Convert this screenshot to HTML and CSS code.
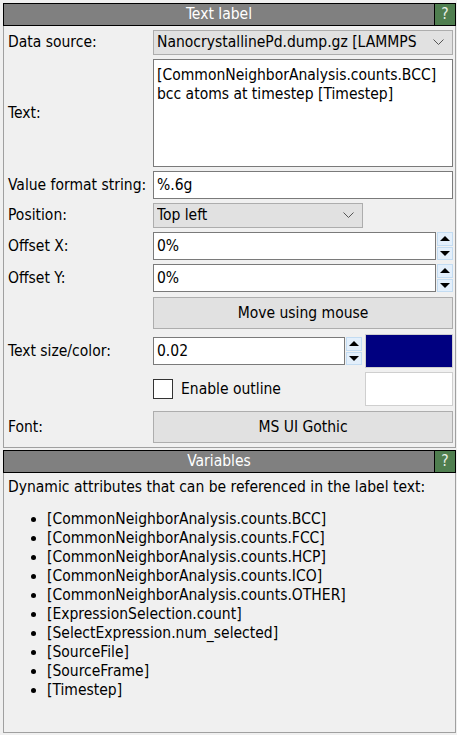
FILE: index.html
```html
<!DOCTYPE html>
<html>
<head>
<meta charset="utf-8">
<link rel="stylesheet" href="styles.css">
</head>
<body>
<div class="panel">
  <div class="titlebar">
    <div class="title">Text label</div>
    <div class="help">?</div>
  </div>
  <div class="pbody form">
    <div class="row">
      <div class="label">Data source:</div>
      <div class="combo wide">
        <span class="combo-text">NanocrystallinePd.dump.gz [LAMMPS</span>
        <svg class="chev" width="11" height="7" viewBox="0 0 11 7"><polyline points="0.5,0.5 5.5,5.5 10.5,0.5" fill="none" stroke="#555" stroke-width="1"/></svg>
      </div>
    </div>
    <div class="row">
      <div class="label">Text:</div>
      <div class="textarea">[CommonNeighborAnalysis.counts.BCC]<br>bcc atoms at timestep [Timestep]</div>
    </div>
    <div class="row">
      <div class="label">Value format string:</div>
      <div class="input grow">%.6g</div>
    </div>
    <div class="row">
      <div class="label">Position:</div>
      <div class="combo pos">
        <span class="combo-text">Top left</span>
        <svg class="chev" width="11" height="7" viewBox="0 0 11 7"><polyline points="0.5,0.5 5.5,5.5 10.5,0.5" fill="none" stroke="#555" stroke-width="1"/></svg>
      </div>
    </div>
    <div class="row">
      <div class="label">Offset X:</div>
      <div class="input grow">0%</div>
      <div class="spinner">
        <div class="spin"><span class="tri-up"></span></div>
        <div class="spin"><span class="tri-down"></span></div>
      </div>
    </div>
    <div class="row">
      <div class="label">Offset Y:</div>
      <div class="input grow">0%</div>
      <div class="spinner">
        <div class="spin"><span class="tri-up"></span></div>
        <div class="spin"><span class="tri-down"></span></div>
      </div>
    </div>
    <div class="row extra">
      <div class="label"></div>
      <div class="button grow">Move using mouse</div>
    </div>
    <div class="row extra tall">
      <div class="label">Text size/color:</div>
      <div class="input grow">0.02</div>
      <div class="spinner">
        <div class="spin"><span class="tri-up"></span></div>
        <div class="spin"><span class="tri-down"></span></div>
      </div>
      <div class="swatch navy"></div>
    </div>
    <div class="row tall">
      <div class="label"></div>
      <div class="check"></div>
      <div class="check-label">Enable outline</div>
      <div class="swatch white"></div>
    </div>
    <div class="row extra">
      <div class="label">Font:</div>
      <div class="button grow">MS UI Gothic</div>
    </div>
  </div>
</div>
<div class="panel second">
  <div class="titlebar">
    <div class="title">Variables</div>
    <div class="help">?</div>
  </div>
  <div class="pbody vars">
    <div class="intro">Dynamic attributes that can be referenced in the label text:</div>
    <ul class="varlist">
      <li>[CommonNeighborAnalysis.counts.BCC]</li>
      <li>[CommonNeighborAnalysis.counts.FCC]</li>
      <li>[CommonNeighborAnalysis.counts.HCP]</li>
      <li>[CommonNeighborAnalysis.counts.ICO]</li>
      <li>[CommonNeighborAnalysis.counts.OTHER]</li>
      <li>[ExpressionSelection.count]</li>
      <li>[SelectExpression.num_selected]</li>
      <li>[SourceFile]</li>
      <li>[SourceFrame]</li>
      <li>[Timestep]</li>
    </ul>
  </div>
</div>
</body>
</html>
```
FILE: styles.css
```css
html, body {
  margin: 0;
  padding: 0;
  background: #f0f0f0;
}
body {
  font-family: "DejaVu Sans Condensed", "DejaVu Sans", sans-serif;
  font-stretch: condensed;
  font-size: 15.5px;
  line-height: 19px;
  color: #000;
  width: 457px;
  height: 735px;
  overflow: hidden;
}
.panel {
  margin: 3px 0 0 3px;
  width: 453px;
}
.panel.second {
  margin-top: 2px;
}
.titlebar {
  display: flex;
  height: 21px;
  border: 1px solid #000;
  background: #808080;
  color: #fff;
}
.title {
  flex: 1;
  text-align: center;
  line-height: 21px;
}
.help {
  width: 20px;
  border-left: 1px solid #000;
  background: #4f7e4f;
  color: #e8f0e8;
  text-align: center;
  line-height: 21px;
}
.pbody {
  border: 1px solid #a0a0a0;
  border-top: none;
}
.form {
  display: flex;
  flex-direction: column;
  gap: 4px;
  padding: 4px 2px 4px 0;
}
.row {
  display: flex;
  align-items: center;
}
.row.extra {
  margin-top: 1px;
}
.row.tall {
  height: 34px;
}
.label {
  width: 145px;
  padding-left: 4px;
  flex: none;
  white-space: nowrap;
}
.grow {
  flex: 1;
  min-width: 0;
}
.combo {
  display: flex;
  align-items: center;
  height: 23px;
  background: #e1e1e1;
  border: 1px solid #adadad;
  padding: 0 8px 0 3px;
  box-sizing: content-box;
}
.combo.wide {
  flex: 1;
  min-width: 0;
}
.combo.pos {
  width: 197px;
}
.combo-text {
  flex: 1;
  overflow: hidden;
  white-space: nowrap;
}
.chev {
  flex: none;
  margin-left: 4px;
}
.textarea {
  flex: 1;
  height: 94px;
  background: #fff;
  border: 1px solid #7a7a7a;
  padding: 6px 3px 6px 3px;
  white-space: nowrap;
  overflow: hidden;
}
.input {
  height: 26px;
  line-height: 26px;
  background: #fff;
  border: 1px solid #7a7a7a;
  padding: 0 3px;
  white-space: nowrap;
}
.spinner {
  width: 16px;
  height: 28px;
  margin-left: 1px;
  display: flex;
  flex-direction: column;
  gap: 1px;
  flex: none;
}
.spin {
  flex: 1;
  background: #e3effb;
  border: 1px solid #c3dcf2;
  display: flex;
  align-items: center;
  justify-content: center;
}
.tri-up {
  width: 0;
  height: 0;
  border-left: 5px solid transparent;
  border-right: 5px solid transparent;
  border-bottom: 5px solid #000;
}
.tri-down {
  width: 0;
  height: 0;
  border-left: 5px solid transparent;
  border-right: 5px solid transparent;
  border-top: 5px solid #000;
}
.button {
  height: 30px;
  line-height: 30px;
  background: #e1e1e1;
  border: 1px solid #adadad;
  text-align: center;
}
.swatch {
  width: 86px;
  height: 32px;
  margin-left: 3px;
  flex: none;
  border: 1px solid #cfcfcf;
}
.swatch.navy {
  background: #000080;
}
.swatch.white {
  background: #fff;
}
.check {
  width: 18px;
  height: 18px;
  border: 1px solid #333;
  background: #fff;
  flex: none;
}
.check-label {
  flex: 1;
  margin-left: 8px;
}
.vars {
  height: 254px;
  padding: 5px 4px 0 4px;
}
.intro {
  white-space: nowrap;
}
.varlist {
  margin: 13px 0 0 0;
  padding: 0 0 0 39px;
  list-style: disc;
}
.varlist li {
  line-height: 19px;
}
```
